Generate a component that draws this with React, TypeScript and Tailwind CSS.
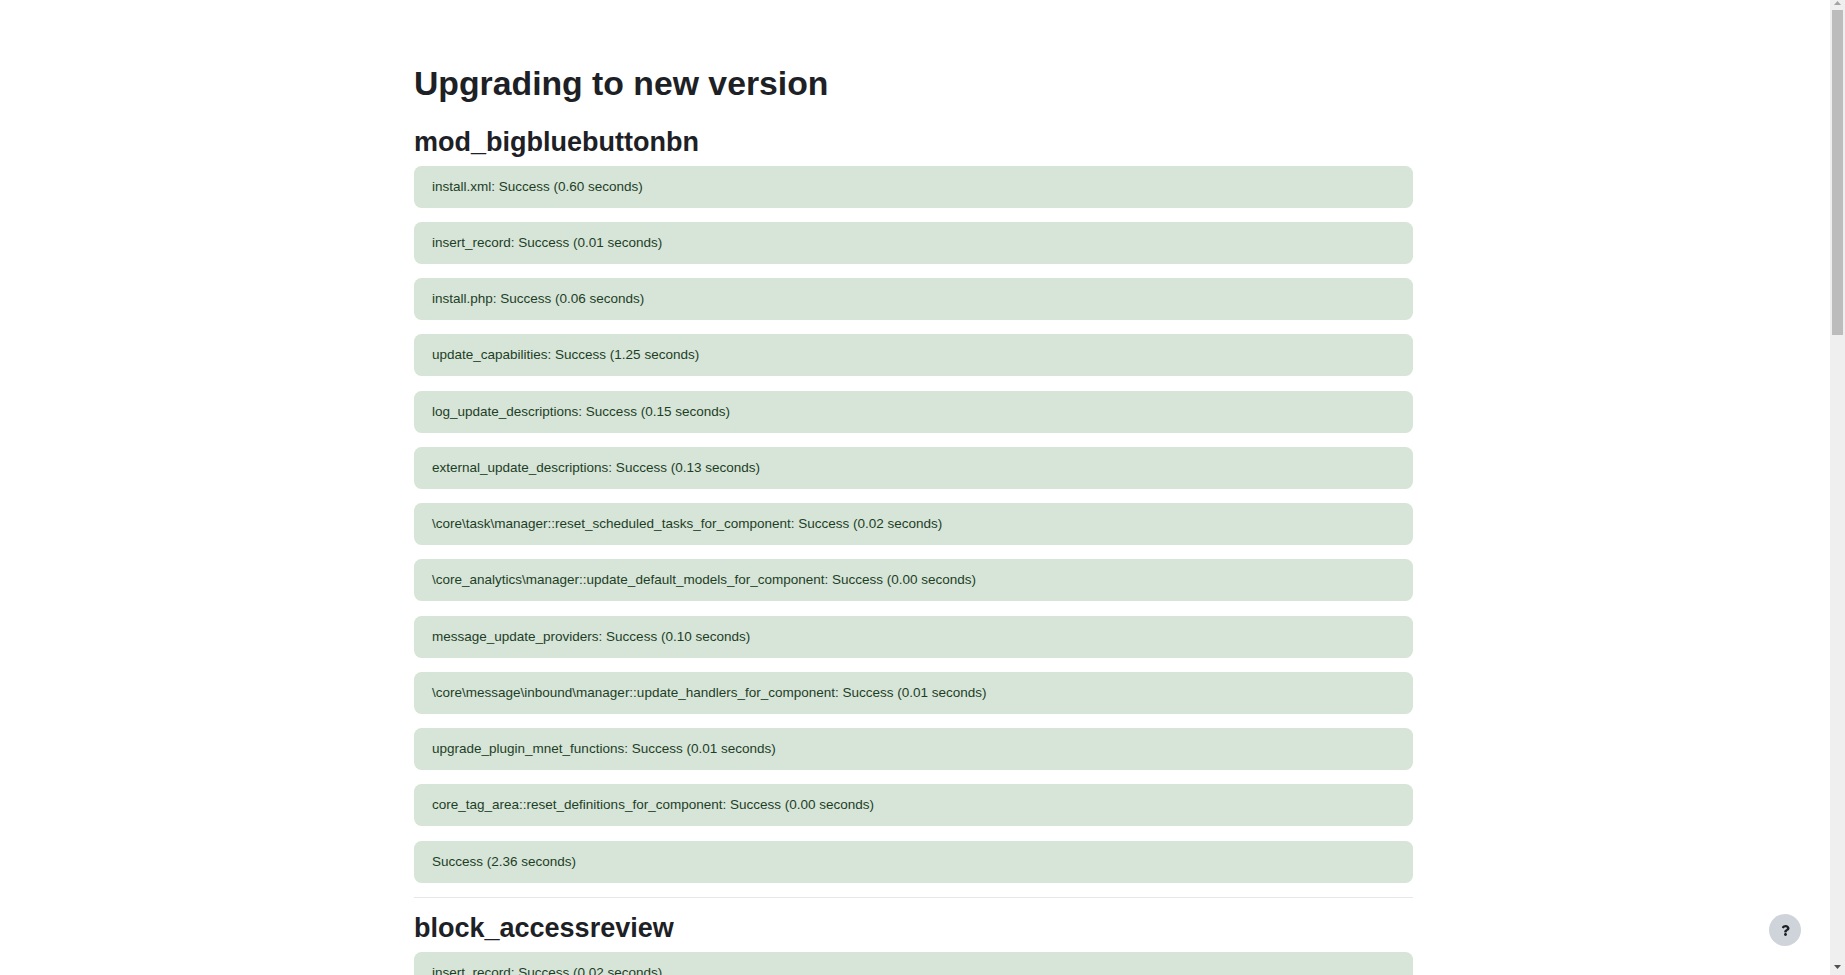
import React from 'react';
import { FaQuestion } from 'react-icons/fa';

const RESULTS = [
  'install.xml: Success (0.60 seconds)',
  'insert_record: Success (0.01 seconds)',
  'install.php: Success (0.06 seconds)',
  'update_capabilities: Success (1.25 seconds)',
  'log_update_descriptions: Success (0.15 seconds)',
  'external_update_descriptions: Success (0.13 seconds)',
  '\\core\\task\\manager::reset_scheduled_tasks_for_component: Success (0.02 seconds)',
  '\\core_analytics\\manager::update_default_models_for_component: Success (0.00 seconds)',
  'message_update_providers: Success (0.10 seconds)',
  '\\core\\message\\inbound\\manager::update_handlers_for_component: Success (0.01 seconds)',
  'upgrade_plugin_mnet_functions: Success (0.01 seconds)',
  'core_tag_area::reset_definitions_for_component: Success (0.00 seconds)',
  'Success (2.36 seconds)',
];

const Notice: React.FC<{ text: string }> = ({ text }) => (
  <div className="mb-[14.25px] rounded-[7.5px] bg-[#d7e4d8] px-[18px] py-[11px] text-[13.5px] leading-[20px] text-[#1c3f26]">
    {text}
  </div>
);

const Scrollbar: React.FC = () => (
  <div className="flex h-full w-[15px] shrink-0 flex-col bg-[#efefef]">
    <div className="flex h-[10px] justify-center pt-[1px]">
      <svg width="7" height="4" viewBox="0 0 7 4"><path d="M3.5 0 7 4H0z" fill="#a3a3a3" /></svg>
    </div>
    <div className="mx-[2px] h-[325px] bg-[#bcbcbc]"></div>
    <div className="flex-1"></div>
    <div className="flex h-[10px] justify-center">
      <svg width="7" height="4" viewBox="0 0 7 4"><path d="M0 0h7L3.5 4z" fill="#505050" /></svg>
    </div>
  </div>
);

export default function App() {
  return (
    <div className="relative flex h-screen overflow-hidden bg-white font-['Liberation_Sans',Arial,sans-serif] text-[#1d2125]">
      <main className="min-w-0 flex-1 overflow-hidden pr-[3px]">
        <div className="mx-auto w-[999px] pt-[63px]">
          <h1 className="mb-[22px] text-[33.75px] leading-[40.5px] font-bold">Upgrading to new version</h1>
          <h2 className="mb-[7.8px] text-[27px] leading-[32.4px] font-bold">mod_bigbluebuttonbn</h2>
          {RESULTS.map((text, i) => (
            <Notice key={i} text={text} />
          ))}
          <hr className="mb-[14.2px] border-t border-[#e5e7e8]" />
          <h2 className="mb-[7.5px] text-[27px] leading-[32.4px] font-bold">block_accessreview</h2>
          <Notice text="insert_record: Success (0.02 seconds)" />
        </div>
      </main>
      <Scrollbar />
      <button className="absolute right-[44px] bottom-[29px] flex h-[32px] w-[32px] items-center justify-center rounded-full bg-[#ced4da] text-[#1d2125]">
        <FaQuestion size={11} />
      </button>
    </div>
  );
}
